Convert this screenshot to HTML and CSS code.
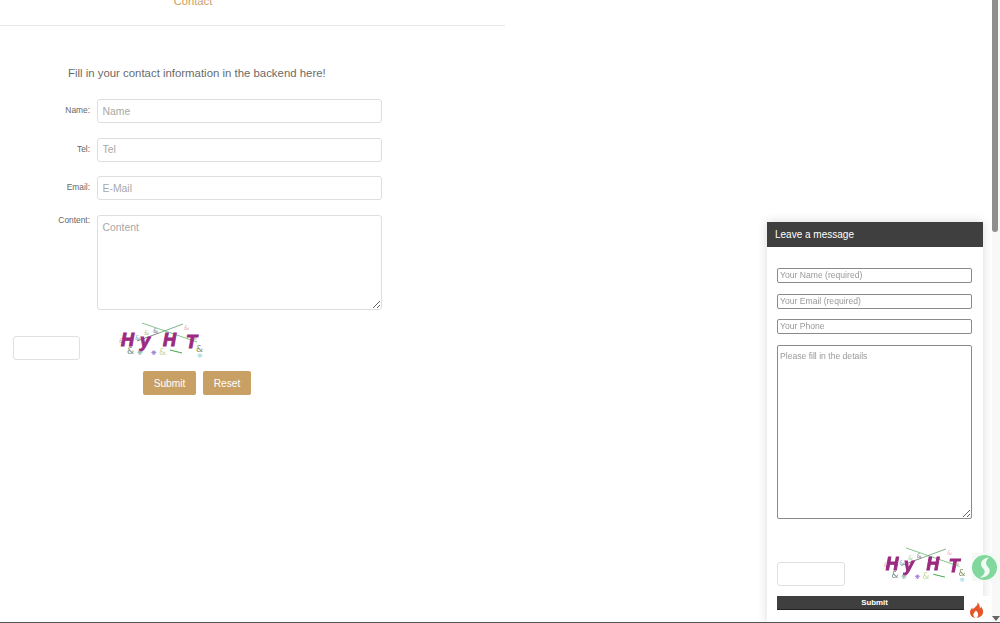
FILE: index.html
```html
<!DOCTYPE html>
<html lang="en">
<head>
<meta charset="utf-8">
<title>Contact</title>
<link rel="stylesheet" href="styles.css">
</head>
<body>
<main class="page">
  <nav class="tabs"><a class="tab">Contact</a></nav>
  <section class="contact">
    <p class="intro">Fill in your contact information in the backend here!</p>
    <form class="form">
      <div class="row"><label class="label">Name:</label><input class="field" placeholder="Name"></div>
      <div class="row"><label class="label">Tel:</label><input class="field" placeholder="Tel"></div>
      <div class="row"><label class="label">Email:</label><input class="field" placeholder="E-Mail"></div>
      <div class="row"><label class="label label-top">Content:</label><textarea class="field area" placeholder="Content"></textarea></div>
      <div class="captcha-row">
        <input class="code">
        <svg class="captcha" viewBox="0 0 86 36">
          <g fill="none" stroke-width=".8"><path d="M23 1 78 20" stroke="#62b56e"/><path d="M64 2 40 11" stroke="#5d9a68"/><path d="M40 11 18 19" stroke="#666"/><path d="M51 28 63 31" stroke="#3fa648" stroke-width="1"/></g>
          <g class="cap-small"><text x="0" y="21" fill="#e8a8b8">&amp;</text><text x="16" y="18" fill="#88a8c8">&amp;</text><text x="25" y="13" fill="#a8d0a0">&amp;</text><text x="34" y="11" fill="#808890">&amp;</text><text x="65" y="8" fill="#eeb0c4">&amp;</text><text x="73" y="18" fill="#d8b8a8">&amp;</text></g>
          <g class="cap-big" fill="#9b2a80" stroke="#9b2a80"><text x="2" y="24">H</text><text x="21" y="25">y</text><text x="44" y="24">H</text><text x="67" y="26">T</text></g>
          <g class="cap-small"><text x="8" y="32" fill="#6f9080" class="cap-mid">&amp;</text><text x="18" y="33" fill="#7bb8a0">❋</text><text x="32" y="33" fill="#8a5fd0">❋</text><text x="40" y="33" fill="#c8d8a0" class="cap-mid">&amp;</text><text x="77" y="30" fill="#8a9060" class="cap-mid">&amp;</text><text x="78" y="36" fill="#a0d8e0">❋</text></g>
        </svg>
      </div>
      <div class="actions"><button type="button" class="btn btn-submit">Submit</button><button type="button" class="btn btn-reset">Reset</button></div>
    </form>
  </section>
</main>

<div class="scrollbar"><div class="thumb"></div><div class="arrow"></div></div>

<aside class="widget">
  <h2 class="widget-title">Leave a message</h2>
  <form class="widget-form">
    <input class="w-field" placeholder="Your Name (required)">
    <input class="w-field" placeholder="Your Email (required)">
    <input class="w-field" placeholder="Your Phone">
    <textarea class="w-field w-area" placeholder="Please fill in the details"></textarea>
    <div class="w-captcha">
      <input class="code w-code">
      <svg class="captcha" viewBox="0 0 86 36">
        <g fill="none" stroke-width=".8"><path d="M23 1 78 20" stroke="#62b56e"/><path d="M64 2 40 11" stroke="#5d9a68"/><path d="M40 11 18 19" stroke="#666"/><path d="M51 28 63 31" stroke="#3fa648" stroke-width="1"/></g>
        <g class="cap-small"><text x="0" y="21" fill="#e8a8b8">&amp;</text><text x="16" y="18" fill="#88a8c8">&amp;</text><text x="25" y="13" fill="#a8d0a0">&amp;</text><text x="34" y="11" fill="#808890">&amp;</text><text x="65" y="8" fill="#eeb0c4">&amp;</text><text x="73" y="18" fill="#d8b8a8">&amp;</text></g>
        <g class="cap-big" fill="#9b2a80" stroke="#9b2a80"><text x="2" y="24">H</text><text x="21" y="25">y</text><text x="44" y="24">H</text><text x="67" y="26">T</text></g>
        <g class="cap-small"><text x="8" y="32" fill="#6f9080" class="cap-mid">&amp;</text><text x="18" y="33" fill="#7bb8a0">❋</text><text x="32" y="33" fill="#8a5fd0">❋</text><text x="40" y="33" fill="#c8d8a0" class="cap-mid">&amp;</text><text x="77" y="30" fill="#8a9060" class="cap-mid">&amp;</text><text x="78" y="36" fill="#a0d8e0">❋</text></g>
      </svg>
    </div>
    <button type="button" class="w-submit">Submit</button>
  </form>
</aside>

<div class="badge-green">
  <svg viewBox="0 0 25 25" width="25" height="25"><circle cx="12.500" cy="12.500" r="12.500" fill="#80d89c"/><path d="M17 2.500C12 3 8.500 6 9 9.800c.4 3 3.300 3.900 3.700 6.300.3 2.200-1.400 4.800-5 6.400 5.400.5 10-2.700 10-6.800 0-3.400-3.200-4.500-3.600-7C13.800 6.700 14.800 4.300 17 2.500Z" fill="#f2fbf5"/></svg>
</div>
<div class="badge-fire">
  <svg viewBox="0 0 16 18" width="14" height="16"><path d="M8.500 0c.6 2.600-.7 4-2.200 5.400C4.700 6.900 3 8.500 3 8.500c-.3-.9-.3-1.700 0-2.500C1.200 7.500 0 9.400 0 11.500 0 15 3 18 6.500 18c-2-1.100-3-2.700-2.500-4.500.4-1.500 2-2.300 2.500-4 1.600 1.200 2.800 2.700 2.800 4.600 0 1.600-.7 3-1.800 3.900 4-.2 7.500-3 7.500-7 0-2.600-1.300-4.400-2.500-6-.1 1.100-.5 1.900-1.300 2.500C11.500 5 10.800 2 8.500 0Z" fill="#e2562a"/></svg>
</div>
<div class="bottom-line"></div>
</body>
</html>
```
FILE: styles.css
```css
* { box-sizing: border-box; }
html, body { margin: 0; height: 623px; overflow: hidden; background: #fff; }
body { font-family: "Liberation Sans", Arial, sans-serif; color: #666; }

.page { width: 505px; }

.tabs {
  height: 26px;
  border-bottom: 1px solid #e6e6e6;
  display: flex;
  justify-content: center;
  align-items: flex-start;
  padding-right: 119px;
  overflow: hidden;
}
.tab { font-size: 11.2px; line-height: 13px; margin-top: -5px; color: #c9a063; }

.contact { padding-top: 40px; }
.intro { margin: 0 0 19.2px 68px; font-size: 11.4px; line-height: 14px; color: #6a6a6a; }

.form { display: flex; flex-direction: column; }
.row { display: flex; align-items: flex-start; gap: 7px; margin-bottom: 14.5px; }
.label { width: 90px; text-align: right; font-size: 8.4px; line-height: 11px; padding-top: 6px; color: #666; }
.label-top { padding-top: 0; }
.field {
  width: 285px;
  height: 24px;
  border: 1px solid #dedede;
  border-radius: 3px;
  padding: 0 4.5px;
  font: 10.4px "Liberation Sans", Arial, sans-serif;
  color: #555;
  background: #fff;
  outline: none;
}
.field::placeholder { color: #a8a8a8; opacity: 1; }
.area { height: 95px; padding-top: 6px; resize: vertical; display: block; }

.captcha-row { display: flex; align-items: flex-start; margin: 11px 0 0 13px; height: 37px; }
.code { width: 67px; height: 24px; margin-top: 1px; border: 1px solid #e0e0e0; border-radius: 3px; background: #fff; outline: none; }
.captcha { width: 86px; height: 36px; display: block; overflow: hidden; }
.captcha-row .captcha { margin: -13px 0 0 39px; }
.cap-big { font: italic 700 18px "Liberation Sans", Arial, sans-serif; stroke-width: 1px; }
.cap-small { font: 6.500px "DejaVu Sans", sans-serif; }
.cap-mid { font-size: 9px; }

.actions { display: flex; gap: 7px; margin: -1px 0 0 143px; }
.btn {
  height: 24px;
  padding: 0;
  border: 0;
  border-radius: 2px;
  background: #c8a063;
  color: #fff;
  font: 10.2px "Liberation Sans", Arial, sans-serif;
}
.btn-submit { width: 53px; }
.btn-reset { width: 48px; }

.scrollbar { position: fixed; top: 0; right: 0; width: 8px; height: 622px; background: #f8f8f8; }
.thumb { position: absolute; left: 0; top: -4px; width: 6px; height: 236px; border-radius: 3px; background: #8e8e8e; }
.arrow { position: absolute; left: 0; bottom: 1px; border: 4px solid transparent; border-top: 5px solid #666; border-bottom: 0; }

.widget {
  position: fixed;
  left: 767px;
  top: 222px;
  width: 216px;
  height: 401px;
  background: #fff;
  box-shadow: 0 0 10px rgba(0,0,0,.15);
}
.widget-title {
  margin: 0;
  height: 25px;
  padding: 0 8px;
  background: #3f3f3f;
  color: #fff;
  font-size: 10px;
  font-weight: 400;
  line-height: 26px;
}
.widget-form { display: flex; flex-direction: column; padding: 21px 11px 0 10px; }
.w-field {
  width: 195px;
  height: 15px;
  margin-bottom: 10.5px;
  padding: 0 2px 1px;
  border: 1px solid #8a8a8a;
  border-radius: 2px;
  font: 8.6px "Liberation Sans", Arial, sans-serif;
  background: #fff;
  outline: none;
}
.w-field::placeholder { color: #999; opacity: 1; }
.w-area { height: 174.5px; margin-bottom: 0; padding-top: 5px; resize: vertical; display: block; }
.w-captcha { display: flex; align-items: flex-start; justify-content: space-between; height: 48px; margin-top: 29.2px; padding-right: 4px; }
.w-code { margin-top: 14px; width: 68px; }
.w-captcha .captcha { width: 85px; height: 35px; margin-top: -1px; }
.w-submit {
  width: 195px;
  height: 14px;
  padding: 0;
  border: 0;
  border-bottom: 1px solid #222;
  background: #3f3f3f;
  color: #fff;
  font: 700 7.9px "Liberation Sans", Arial, sans-serif;
}

.badge-green {
  position: fixed;
  left: 972px;
  top: 553px;
  width: 28px;
  height: 28px;
  padding: 1.500px 0 0 0;
  background: #f4f9f5;
}
.badge-fire {
  position: fixed;
  left: 964px;
  top: 596px;
  width: 27px;
  height: 27px;
  padding: 6px 0 0 6px;
  background: #fff;
}
.bottom-line { position: fixed; left: 0; right: 0; top: 622px; height: 1px; background: #555; }
```
